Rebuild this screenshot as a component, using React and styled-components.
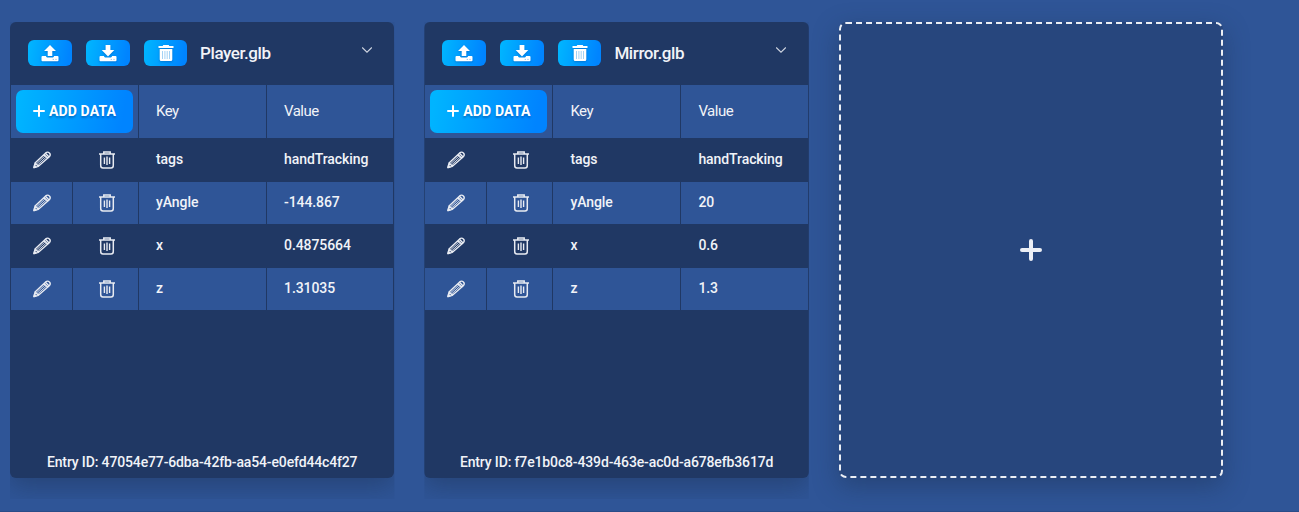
import React from "react";
import styled, { createGlobalStyle, css } from "styled-components";

const GlobalStyle = createGlobalStyle`
  * { box-sizing: border-box; }
  body {
    margin: 0;
    background: #2f5597;
    color: #f1f3f8;
    font-family: Roboto, "Liberation Sans", sans-serif;
    overflow: hidden;
  }
`;

const Page = styled.main`
  height: 512px;
  padding: 22px 10px 0;
  display: flex;
  align-items: flex-start;
  gap: 30px;
  border-bottom: 1px solid #2a4c88;
`;

const CardClip = styled.div`
  flex: 0 0 384.4px;
  clip-path: inset(0 0 -21px 0);
`;

const Card = styled.section`
  height: 456px;
  display: flex;
  flex-direction: column;
  background: #203864;
  border-radius: 6px;
  box-shadow: 0 8px 26px rgba(25, 42, 70, 0.4);
`;

const CardHeader = styled.header`
  height: 62px;
  flex: none;
  display: flex;
  align-items: center;
  padding: 0 21.8px 0 18px;
`;

const gradient = css`
  border: 0;
  color: #fff;
  background: linear-gradient(100deg, #00b4ff 5%, #0084ff 90%);
`;

const IconButton = styled.button`
  ${gradient}
  width: ${(p) => p.$width || 44}px;
  height: 26px;
  padding: 0;
  margin-right: 14px;
  border-radius: 6px;
  display: grid;
  place-items: center;

  svg { filter: drop-shadow(0 1px 1px rgba(0, 40, 110, 0.3)); }
`;

const Title = styled.h2`
  margin: 0 0 0 -1px;
  flex: 1;
  font-size: 17px;
  font-weight: 500;
  letter-spacing: -0.4px;
  white-space: nowrap;
`;

const Chevron = styled.svg`
  width: 12px;
  height: 8px;
  margin-top: -7px;
  fill: none;
  stroke: #d0d6e1;
  stroke-width: 1.05;
`;

const Table = styled.div`
  display: flex;
  flex-direction: column;
  gap: 1px;
  padding: 1px;
`;

const HeadRow = styled.div`
  display: grid;
  grid-template-columns: 127px 127px 1fr;
  gap: 1px;
  height: 53px;
`;

const Row = styled.div`
  display: grid;
  grid-template-columns: 61px 65px 127px 1fr;
  gap: 1px;
  height: 42px;
`;

const Cell = styled.div`
  display: flex;
  align-items: center;
  justify-content: flex-start;
  padding: 0 17px 2px;
  background: ${(p) => (p.$dark ? "#203864" : "#2f5597")};
  font-size: 14px;
  font-weight: 500;
  letter-spacing: -0.08px;
  white-space: nowrap;
`;

const ActionCell = styled(Cell)`
  justify-content: center;
  padding: 0 0 0 ${(p) => p.$shift || 0}px;
`;

const HeadCell = styled(Cell)`
  font-size: 15px;
  font-weight: 400;
  letter-spacing: -0.5px;
`;

const AddCell = styled(Cell)`
  padding: 5px;
`;

const AddButton = styled.button`
  ${gradient}
  width: 117px;
  height: 43px;
  padding: 0 0 1px;
  border-radius: 7px;
  display: flex;
  align-items: center;
  justify-content: center;
  gap: 4px;
  font: 700 14px Roboto, sans-serif;
  letter-spacing: 0.15px;
  text-shadow: 0 2px 2px rgba(0, 40, 110, 0.35);
`;

const EntryId = styled.footer`
  margin-top: auto;
  height: 31px;
  line-height: 31px;
  text-align: center;
  font-size: 14px;
  font-weight: 500;
  white-space: nowrap;
  letter-spacing: -0.14px;
`;

const NewCard = styled.button`
  flex: 0 0 384.4px;
  height: 456px;
  padding: 0;
  display: grid;
  place-items: center;
  color: #eceff5;
  background: #27467d;
  border: 2px dashed #eceff5;
  border-radius: 7px;
  box-shadow: 0 8px 26px rgba(25, 42, 70, 0.4);
`;

const TransferIcon = ({ up }) => (
  <svg width="18" height="17" viewBox="0 0 18 17" fill="#fff">
    {up ? (
      <path d="M9 0 15 6H11.3V11H6.7V6H3Z" />
    ) : (
      <path d="M6.6 0H11.4V5H15.3L9 11.5 2.7 5H6.6Z" />
    )}
    <path d="M1.5 11H5V11.6L6 12.4H12L13 11.6V11H16.5Q17.5 11 17.5 12V15.2Q17.5 16.2 16.5 16.2H1.5Q.5 16.2 .5 15.2V12Q.5 11 1.5 11Z" />
    <path d="M11.7 14.4H12.9M14.4 14.4H15.6" stroke="#79b7ea" strokeWidth=".9" />
  </svg>
);

const SolidTrash = () => (
  <svg width="16" height="17" viewBox="0 0 16 17">
    <path fill="#fff" d="M5.3 0H10.7L11.3 1H15.5V3H.5V1H4.7ZM1.7 4H14.3V14.5Q14.3 16 12.8 16H3.2Q1.7 16 1.7 14.5Z" />
    <path d="M4.5 6V14M6.9 6V14M9.2 6V14M11.5 6V14" stroke="#8bc7f3" strokeWidth=".8" />
  </svg>
);

const Pencil = () => (
  <svg width="18" height="18" viewBox="0 0 18 18" fill="none" stroke="#e8ebf2" strokeWidth="1.4" strokeLinejoin="round" strokeLinecap="round">
    <path d="M.9 16.6 2 12.1 12.7 1.9Q14.6.3 16.4 2 18.1 3.8 16.3 5.7L5.4 15.3ZM2 12.1 5.4 15.3M11 3.5 14.7 7.2M12.5 2.2 16 5.9" />
    <path d="M3.2 13.2 12.1 4.8M4.3 14.3 13.3 6.1" strokeWidth=".9" />
    <path d="M1 16.6 1.6 14.4 3.1 15.9Z" fill="#e8ebf2" />
  </svg>
);

const OutlineTrash = () => (
  <svg width="18" height="18" viewBox="0 0 18 18" fill="none" stroke="#e8ebf2" strokeWidth="1.5">
    <path d="M1 3H17M5.8 3V.9H12.2V3M2.7 3V14.5Q2.7 17 5 17H13Q15.3 17 15.3 14.5V3" />
    <path d="M6.4 6.5V13M9 5.5V14M11.6 6.5V13" strokeWidth="1.4" />
  </svg>
);

const Plus = ({ size, weight }) => (
  <svg width={size} height={size} viewBox={`0 0 ${size} ${size}`} stroke="currentColor" strokeWidth={weight} strokeLinecap="round">
    <path d={`M${size / 2} ${weight / 2}V${size - weight / 2}M${weight / 2} ${size / 2}H${size - weight / 2}`} />
  </svg>
);

const entries = [
  {
    name: "Player.glb",
    id: "47054e77-6dba-42fb-aa54-e0efd44c4f27",
    data: [["tags", "handTracking"], ["yAngle", "-144.867"], ["x", "0.4875664"], ["z", "1.31035"]],
  },
  {
    name: "Mirror.glb",
    id: "f7e1b0c8-439d-463e-ac0d-a678efb3617d",
    data: [["tags", "handTracking"], ["yAngle", "20"], ["x", "0.6"], ["z", "1.3"]],
  },
];

const EntryCard = ({ entry }) => (
  <CardClip>
    <Card>
      <CardHeader>
        <IconButton aria-label="Upload"><TransferIcon up /></IconButton>
        <IconButton aria-label="Download"><TransferIcon /></IconButton>
        <IconButton aria-label="Delete" $width={43}><SolidTrash /></IconButton>
        <Title>{entry.name}</Title>
        <Chevron viewBox="0 0 12 8"><path d="M1.2 1.5 6 6.2 10.8 1.5" /></Chevron>
      </CardHeader>
      <Table>
        <HeadRow>
          <AddCell><AddButton><Plus size={12} weight={2} />ADD DATA</AddButton></AddCell>
          <HeadCell>Key</HeadCell>
          <HeadCell>Value</HeadCell>
        </HeadRow>
        {entry.data.map(([key, value], i) => (
          <Row key={key}>
            <ActionCell $dark={i % 2 === 0}><Pencil /></ActionCell>
            <ActionCell $shift={2} $dark={i % 2 === 0}><OutlineTrash /></ActionCell>
            <Cell $dark={i % 2 === 0}>{key}</Cell>
            <Cell $dark={i % 2 === 0}>{value}</Cell>
          </Row>
        ))}
      </Table>
      <EntryId>Entry ID: {entry.id}</EntryId>
    </Card>
  </CardClip>
);

export default function App() {
  return (
    <>
      <GlobalStyle />
      <Page>
        {entries.map((entry) => <EntryCard key={entry.id} entry={entry} />)}
        <NewCard aria-label="New entry"><Plus size={22} weight={4} /></NewCard>
      </Page>
    </>
  );
}
